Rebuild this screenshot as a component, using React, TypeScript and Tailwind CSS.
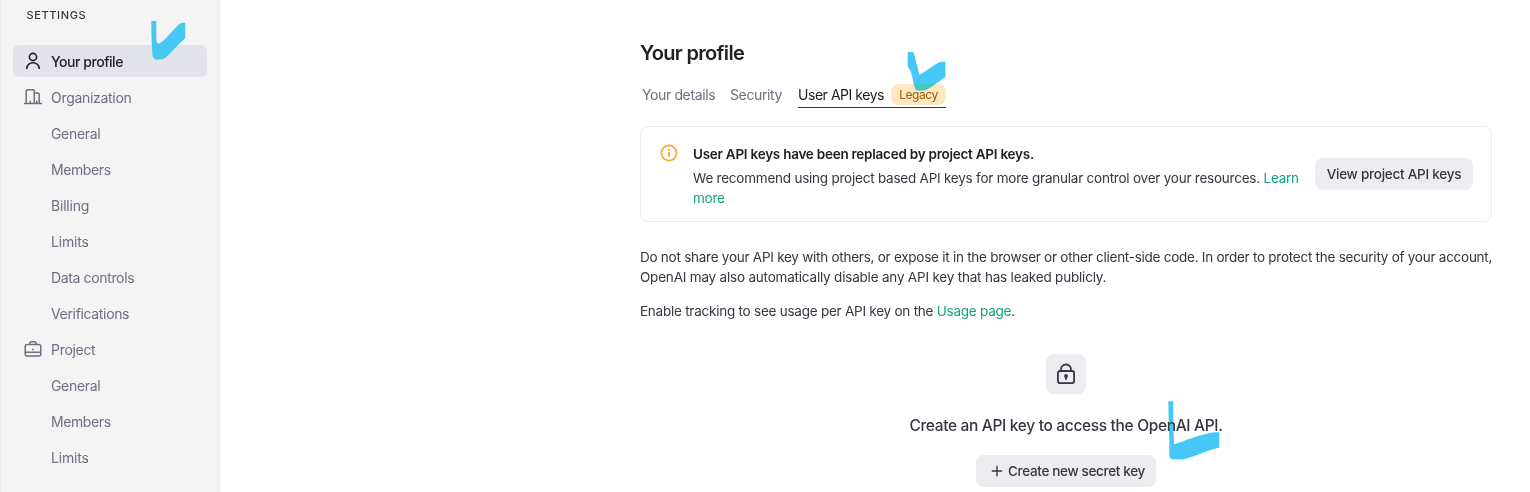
import React from "react";

type Item = { label: string; icon?: React.ReactNode; active?: boolean; track: string };

const UserIcon = () => (
  <svg width="18" height="18" viewBox="0 0 18 18" fill="none" stroke="#202123" strokeWidth="1.6">
    <circle cx="9" cy="5" r="3.6" />
    <path d="M2.8 17v-.7a6.2 5.5 0 0 1 12.4 0v.7" />
  </svg>
);

const BuildingIcon = () => (
  <svg width="18" height="18" viewBox="0 0 18 18" fill="none" stroke="#6e6e80" strokeWidth="1.5">
    <path d="M0 15.5h18M2.2 15.500V3.200a1.500 1.500 0 0 1 1.500-1.500h5.100a1.500 1.500 0 0 1 1.500 1.500v12.300M10.300 5h3.400a1.500 1.500 0 0 1 1.500 1.500v9M6.300 15.500v-2.800M12.800 15.500v-2.800" />
  </svg>
);

const BriefcaseIcon = () => (
  <svg width="18" height="18" viewBox="0 0 18 18" fill="none" stroke="#6e6e80" strokeWidth="1.5">
    <rect x="1.2" y="4.500" width="15.6" height="11.500" rx="2" />
    <path d="M5.800 4.300V3.500a1.800 1.800 0 0 1 1.800-1.800h2.800a1.800 1.800 0 0 1 1.800 1.800v.8M1.500 12.200h15" />
    <path d="M8.200 9.500h1.600" />
  </svg>
);

const items: Item[] = [
  { label: "Your profile", icon: <UserIcon />, active: true, track: "tracking-[-0.46px]" },
  { label: "Organization", icon: <BuildingIcon />, track: "tracking-[-0.3px]" },
  { label: "General", track: "tracking-[-0.33px]" },
  { label: "Members", track: "tracking-[-0.4px]" },
  { label: "Billing", track: "tracking-[-0.2px]" },
  { label: "Limits", track: "tracking-[-0.2px]" },
  { label: "Data controls", track: "tracking-[-0.36px]" },
  { label: "Verifications", track: "tracking-[-0.34px]" },
  { label: "Project", icon: <BriefcaseIcon />, track: "tracking-[-0.3px]" },
  { label: "General", track: "tracking-[-0.33px]" },
  { label: "Members", track: "tracking-[-0.4px]" },
  { label: "Limits", track: "tracking-[-0.2px]" },
];

function Sidebar() {
  return (
    <aside className="flex h-full w-[220px] shrink-0 flex-col border-r border-l border-r-[#ececf1] border-l-[#ececf1] bg-[#f4f4f4] pr-3 pl-3">
      <div className="mt-[7px] pl-[13.5px] text-[11px] leading-4 font-medium tracking-[0.62px] text-[#353740]">SETTINGS</div>
      <nav className="mt-[22px] flex flex-col gap-1">
        {items.map((it, i) => (
          <div
            key={i}
            className={
              it.active
                ? "flex h-8 shrink-0 items-center rounded-md bg-[#e3e3eb] pl-[11px] font-medium text-[#202123]"
                : "flex h-8 shrink-0 items-center rounded-md pl-[11px] text-[#6e6e80]"
            }
          >
            <span className="flex w-[27px] shrink-0">{it.icon}</span>
            <span className={`mt-[2px] text-sm whitespace-nowrap ${it.track}`}>{it.label}</span>
          </div>
        ))}
      </nav>
    </aside>
  );
}

export default function App() {
  return (
    <div className="relative flex h-[492px] w-[1530px] overflow-hidden bg-white font-['Inter','Liberation_Sans',sans-serif] text-[13.5px] text-[#353740]">
      <Sidebar />
      <main className="ml-[420px] flex w-[852px] flex-col">
        <h1 className="mt-[41px] text-xl leading-6 font-semibold tracking-[-0.66px] text-[#202123]">Your profile</h1>
        <div className="mt-[18px] flex h-[25px] text-sm whitespace-nowrap text-[#6e6e80]">
          <span className="ml-[2px] w-[88px] leading-[23px] tracking-[-0.38px]">Your details</span>
          <span className="w-[68px] leading-[23px] tracking-[-0.38px]">Security</span>
          <div className="flex w-[148px] border-b border-[#353740] text-[#202123]">
            <span className="w-[94px] leading-[23px] tracking-[-0.46px]">User API keys</span>
            <span className="mt-[1px] flex h-[21px] w-[55px] shrink-0 items-center justify-center rounded-lg bg-[#ffe7c2] text-xs tracking-[-0.45px] text-[#975a08]">Legacy</span>
          </div>
        </div>
        <section className="mt-[18px] flex h-24 shrink-0 items-center rounded-lg border border-[#ececf1] pr-[18px] pl-[19px]">
          <svg className="mt-[17px] self-start" width="18" height="18" viewBox="0 0 18 18" fill="none" stroke="#f4ac36" strokeWidth="1.7">
            <circle cx="9" cy="9" r="7.600" />
            <path d="M9 8v4.800M9 4.800v1.900" strokeWidth="1.9" />
          </svg>
          <div className="mt-[3px] ml-[15px] w-[622px] whitespace-nowrap">
            <p className="leading-5 font-semibold tracking-[-0.25px] text-[#202123]">User API keys have been replaced by project API keys.</p>
            <p className="mt-1 leading-5 tracking-[-0.23px]">
              We recommend using project based API keys for more granular control over your resources. <span className="text-[#10a37f]">Learn<br />more</span>
            </p>
          </div>
          <button className="h-8 w-[158px] shrink-0 rounded-lg bg-[#ececf1] font-medium tracking-[-0.24px] whitespace-nowrap">View project API keys</button>
        </section>
        <p className="mt-[25px] leading-5 tracking-[-0.255px] whitespace-nowrap">
          Do not share your API key with others, or expose it in the browser or other client-side code. In order to protect the security of your account,<br />
          <span className="tracking-[-0.2px]">OpenAI may also automatically disable any API key that has leaked publicly.</span>
        </p>
        <p className="mt-[14px] leading-5 tracking-[-0.24px]">
          Enable tracking to see usage per API key on the <span className="text-[#10a37f]">Usage page</span>.
        </p>
        <div className="mt-[33px] flex flex-col items-center">
          <div className="flex size-10 items-center justify-center rounded-lg bg-[#ececf1]">
            <svg width="20" height="22" viewBox="0 0 20 22" fill="none" stroke="#353740" strokeWidth="1.8">
              <rect x="1.9" y="8" width="16.2" height="12.1" rx="2" />
              <path d="M5 8V6.5a5 5 0 0 1 10 0V8" />
              <path d="M10 13v3.8" />
              <circle cx="10" cy="13" r="1" fill="#353740" />
            </svg>
          </div>
          <p className="mt-5 text-[15.5px] leading-6 font-medium tracking-[-0.33px] whitespace-nowrap">Create an API key to access the OpenAI API.</p>
          <button className="mt-[17px] flex h-8 w-[180px] items-center gap-[5px] rounded-lg bg-[#ececf1] pl-[15px] font-medium tracking-[-0.33px] whitespace-nowrap">
            <svg width="12" height="12" viewBox="0 0 12 12" stroke="#353740" strokeWidth="1.4"><path d="M6 .8v10.4M.8 6h10.4" /></svg>
            Create new secret key
          </button>
        </div>
      </main>
      <svg className="absolute top-5 left-[150px] mix-blend-darken" width="38" height="42" viewBox="150 20 38 42" fill="#45c8f8">
        <path d="M151.300 21h5v17c0 3 .5 5.500 2.500 5.500 3 0 12-11 18-17 2.500-2.500 4-3.700 6-3.700h2.400v15.500c-6 5-12 12-17 17-3 3-5 4.200-8 4.200h-4c-2.500 0-4-3-4-8-.5-10-.9-20-.9-30.500z" />
      </svg>
      <svg className="absolute top-[50px] left-[905px] mix-blend-darken" width="42" height="42" viewBox="905 50 42 42" fill="#45c8f8">
        <path d="M907.700 52h5.300c1.500 2 3 10 6.500 22.700 4-1.500 14-10 21-12.900h4.900v15.500c-7 4-13 10-19 12.500-2 1-8 1.200-10 .5-2-1-3-9-4.500-15-1-4-2-5-4.200-9z" />
      </svg>
      <svg className="absolute top-[400px] left-[1166px] mix-blend-darken" width="56" height="62" viewBox="1166 400 56 62" fill="#45c8f8">
        <path d="M1168.300 401.300h5c0 14 0 28 .8 42.900 8-2 18-8 40-12h5.200v15.300c-12 3-20 7-31 10.500-6 1.800-11 1.500-16 1.300-2-.2-3-2-3-6 .5-18-1-35-1-52z" />
      </svg>
    </div>
  );
}
